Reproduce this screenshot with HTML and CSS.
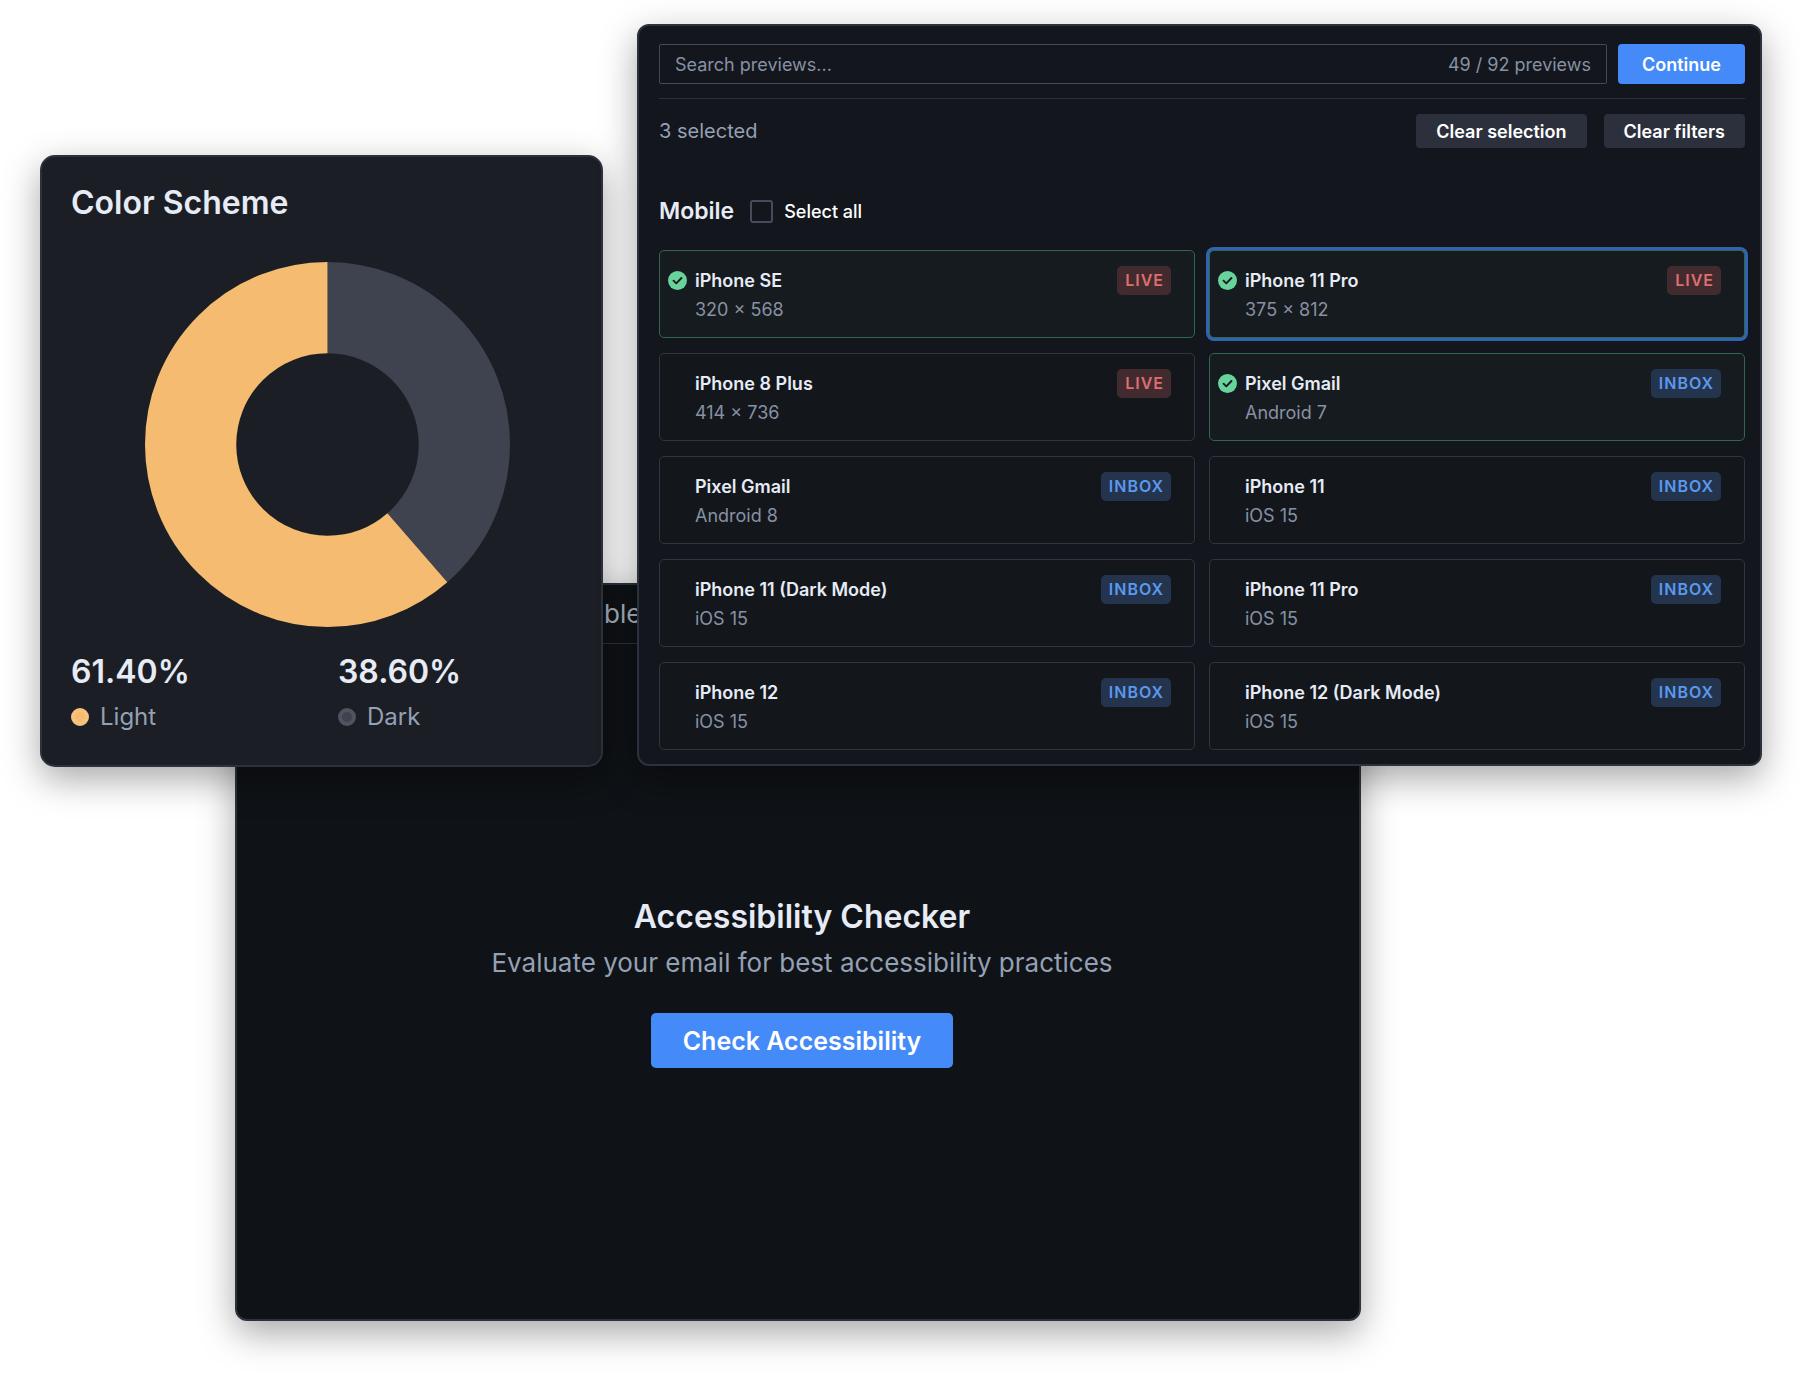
FILE: index.html
```html
<!DOCTYPE html>
<html lang="en">
<head>
<meta charset="utf-8">
<meta name="viewport" content="width=device-width, initial-scale=1">
<title>Email previews</title>
<link rel="stylesheet" href="styles.css">
</head>
<body>
<svg class="sprite" aria-hidden="true">
  <symbol id="check" viewBox="0 0 20 20">
    <circle cx="10" cy="10" r="10" fill="#68d39b"/>
    <path d="M5.800 10.200l2.900 2.800 5.500-5.600" fill="none" stroke="#151b20" stroke-width="2" stroke-linecap="round" stroke-linejoin="round"/>
  </symbol>
</svg>
<main class="stage">
  <section class="window checker">
    <header class="checker-bar">ble</header>
    <div class="checker-body">
      <h2 class="title">Accessibility Checker</h2>
      <p class="checker-text">Evaluate your email for best accessibility practices</p>
      <button class="primary primary-large" type="button">Check Accessibility</button>
    </div>
  </section>

  <section class="window scheme">
    <h2 class="title">Color Scheme</h2>
    <svg class="donut" viewBox="-182 -182 364 364" role="img" aria-label="61.40% light, 38.60% dark">
      <circle r="136.500" fill="none" stroke="#3e434f" stroke-width="91" pathLength="100" stroke-dasharray="38.600 61.400" transform="rotate(-90)"/>
      <circle r="136.500" fill="none" stroke="#f5bb70" stroke-width="91" pathLength="100" stroke-dasharray="61.400 38.600" stroke-dashoffset="-38.600" transform="rotate(-90)"/>
    </svg>
    <dl class="legend">
      <div class="legend-item"><dd class="legend-value">61.40%</dd><dt class="legend-label"><span class="dot dot-light"></span>Light</dt></div>
      <div class="legend-item"><dd class="legend-value">38.60%</dd><dt class="legend-label"><span class="dot dot-dark"></span>Dark</dt></div>
    </dl>
  </section>

  <section class="window previews">
    <form class="search-row">
      <div class="search">
        <input class="search-input" type="search" aria-label="Search previews" placeholder="Search previews...">
        <span class="search-count">49 / 92 previews</span>
      </div>
      <button class="primary" type="button">Continue</button>
    </form>
    <div class="selection-row">
      <span class="selected-count">3 selected</span>
      <button class="secondary" type="button">Clear selection</button>
      <button class="secondary" type="button">Clear filters</button>
    </div>
    <div class="group-row">
      <h3 class="group-name">Mobile</h3>
      <input class="tick" type="checkbox" id="select-all">
      <label class="tick-label" for="select-all">Select all</label>
    </div>
    <div class="cards">
      <button class="card card-selected" type="button" aria-pressed="true"><svg class="card-check"><use href="#check"/></svg><span class="card-text"><span class="card-name">iPhone SE</span><span class="card-detail">320 × 568</span></span><span class="badge badge-live">LIVE</span></button>
      <button class="card card-selected card-focused" type="button" aria-pressed="true"><svg class="card-check"><use href="#check"/></svg><span class="card-text"><span class="card-name">iPhone 11 Pro</span><span class="card-detail">375 × 812</span></span><span class="badge badge-live">LIVE</span></button>
      <button class="card" type="button" aria-pressed="false"><span class="card-text"><span class="card-name">iPhone 8 Plus</span><span class="card-detail">414 × 736</span></span><span class="badge badge-live">LIVE</span></button>
      <button class="card card-selected" type="button" aria-pressed="true"><svg class="card-check"><use href="#check"/></svg><span class="card-text"><span class="card-name">Pixel Gmail</span><span class="card-detail">Android 7</span></span><span class="badge badge-inbox">INBOX</span></button>
      <button class="card" type="button" aria-pressed="false"><span class="card-text"><span class="card-name">Pixel Gmail</span><span class="card-detail">Android 8</span></span><span class="badge badge-inbox">INBOX</span></button>
      <button class="card" type="button" aria-pressed="false"><span class="card-text"><span class="card-name">iPhone 11</span><span class="card-detail">iOS 15</span></span><span class="badge badge-inbox">INBOX</span></button>
      <button class="card" type="button" aria-pressed="false"><span class="card-text"><span class="card-name">iPhone 11 (Dark Mode)</span><span class="card-detail">iOS 15</span></span><span class="badge badge-inbox">INBOX</span></button>
      <button class="card" type="button" aria-pressed="false"><span class="card-text"><span class="card-name">iPhone 11 Pro</span><span class="card-detail">iOS 15</span></span><span class="badge badge-inbox">INBOX</span></button>
      <button class="card" type="button" aria-pressed="false"><span class="card-text"><span class="card-name">iPhone 12</span><span class="card-detail">iOS 15</span></span><span class="badge badge-inbox">INBOX</span></button>
      <button class="card" type="button" aria-pressed="false"><span class="card-text"><span class="card-name">iPhone 12 (Dark Mode)</span><span class="card-detail">iOS 15</span></span><span class="badge badge-inbox">INBOX</span></button>
    </div>
  </section>
</main>
</body>
</html>
```
FILE: styles.css
```css
* { box-sizing: border-box; }

body {
  margin: 0;
  background: #fff;
  color: #e6ebf5;
  font-family: Inter, "Liberation Sans", sans-serif;
  font-size: 18px;
}

button, input { font: inherit; }
h2, h3, p, dl, dd { margin: 0; }
.sprite { display: none; }

/* The windows share one row and overlap by column span. */
.stage {
  display: grid;
  grid-template-columns: 40px 195fr 368fr 34px 724fr 401fr 40px;
  align-items: start;
  padding-bottom: 56px;
}

.window {
  grid-row: 1;
  border: 2px solid #2b323e;
  border-radius: 12px;
  box-shadow: 0 12px 36px rgba(0, 0, 0, 0.35);
}

.title {
  font-size: 32px;
  line-height: 40px;
  font-weight: 600;
}

.primary, .secondary {
  border: 0;
  border-radius: 4px;
  color: #fff;
  font-weight: 600;
}
.primary { padding: 0 24px; background: #448af8; }
.primary-large {
  height: 55px;
  margin-top: 34px;
  padding: 0 32px;
  border-radius: 5px;
  font-size: 25px;
}
.secondary { height: 34px; padding: 0 20px; background: #2c303c; }

/* Accessibility checker */
.checker {
  grid-column: 3 / 6;
  display: flex;
  flex-direction: column;
  min-height: 738px;
  margin-top: 583px;
  background: #0f1216;
}
.checker-bar {
  padding: 9px 0 9px 367px;
  border-bottom: 1px solid #2b313b;
  color: #a9b1be;
  font-size: 26px;
  line-height: 40px;
}
.checker-body {
  display: flex;
  flex: 1;
  flex-direction: column;
  align-items: center;
  justify-content: center;
  padding: 2px 0 0 8px;
}
.checker-text {
  margin-top: 10px;
  color: #94a0b3;
  font-size: 26px;
  line-height: 32px;
}

/* Color scheme */
.scheme {
  grid-column: 2 / 4;
  display: flex;
  flex-direction: column;
  margin-top: 155px;
  padding: 26px 18px 30px 29px;
  border-radius: 15px;
  background: #1b1e24;
}
.donut {
  width: 365px;
  max-width: 100%;
  margin: 39px 0 24px;
  align-self: center;
}
.legend { display: grid; grid-template-columns: 267fr 245fr; }
.legend-item { display: flex; flex-direction: column; gap: 6px; }
.legend-value {
  font-size: 32px;
  line-height: 42px;
  font-weight: 600;
}
.legend-label {
  display: flex;
  align-items: center;
  gap: 11px;
  order: 1;
  color: #94a0b3;
  font-size: 24px;
  line-height: 36px;
}
.dot { width: 18px; height: 18px; border-radius: 50%; }
.dot-light { border: 4px solid #f7c27c; background: #f5bb70; }
.dot-dark { border: 4px solid #50545f; background: #3e434f; }

/* Previews */
.previews {
  grid-column: 5 / 7;
  margin-top: 24px;
  padding: 18px 15px 14px 20px;
  background: #13161c;
}
.search-row {
  display: flex;
  gap: 11px;
  padding-bottom: 14px;
  border-bottom: 1px solid #2b303b;
}
.search {
  display: flex;
  flex: 1;
  align-items: center;
  height: 40px;
  padding: 0 15px;
  border: 1px solid #434957;
  border-radius: 2px;
  color: #8791a3;
}
.search-input {
  flex: 1;
  min-width: 0;
  padding: 0;
  border: 0;
  outline: 0;
  background: none;
  color: inherit;
  appearance: none;
}
.search-input::placeholder { color: inherit; opacity: 1; }
.selection-row {
  display: flex;
  align-items: center;
  gap: 17px;
  padding-top: 15px;
}
.selected-count {
  flex: 1;
  color: #94a0b3;
  font-size: 20px;
}
.group-row {
  display: flex;
  align-items: center;
  height: 24px;
  margin: 51px 0 27px;
}
.group-name {
  margin-right: 16px;
  font-size: 23px;
  font-weight: 600;
}
.tick {
  width: 23px;
  height: 23px;
  margin: 0 11px 0 0;
  border: 2px solid #454d5c;
  border-radius: 3px;
  appearance: none;
}
.tick-label { color: #fff; font-weight: 500; }

.cards {
  display: grid;
  grid-template-columns: 1fr 1fr;
  gap: 15px 14px;
}
.card {
  position: relative;
  display: flex;
  align-items: flex-start;
  justify-content: space-between;
  height: 88px;
  padding: 15px 23px 0 35px;
  border: 1px solid #303541;
  border-radius: 5px;
  background: #13171c;
  color: inherit;
  text-align: left;
}
.card-selected { border-color: #31664f; background: #161b1f; }
.card-focused { box-shadow: 0 0 0 3px #3064b3; }
.card-check {
  position: absolute;
  top: 20px;
  left: 8px;
  width: 19px;
  height: 19px;
}
.card-text { display: flex; flex-direction: column; line-height: 29px; }
.card-name { font-weight: 600; }
.card-detail { color: #8791a3; }
.badge {
  padding: 0 7px 0 8px;
  border-radius: 5px;
  font-size: 16px;
  font-weight: 600;
  line-height: 29px;
  letter-spacing: 1px;
}
.badge-live { background: #412b2f; color: #df6e6e; }
.badge-inbox { background: #24344d; color: #5b99ee; }
```
